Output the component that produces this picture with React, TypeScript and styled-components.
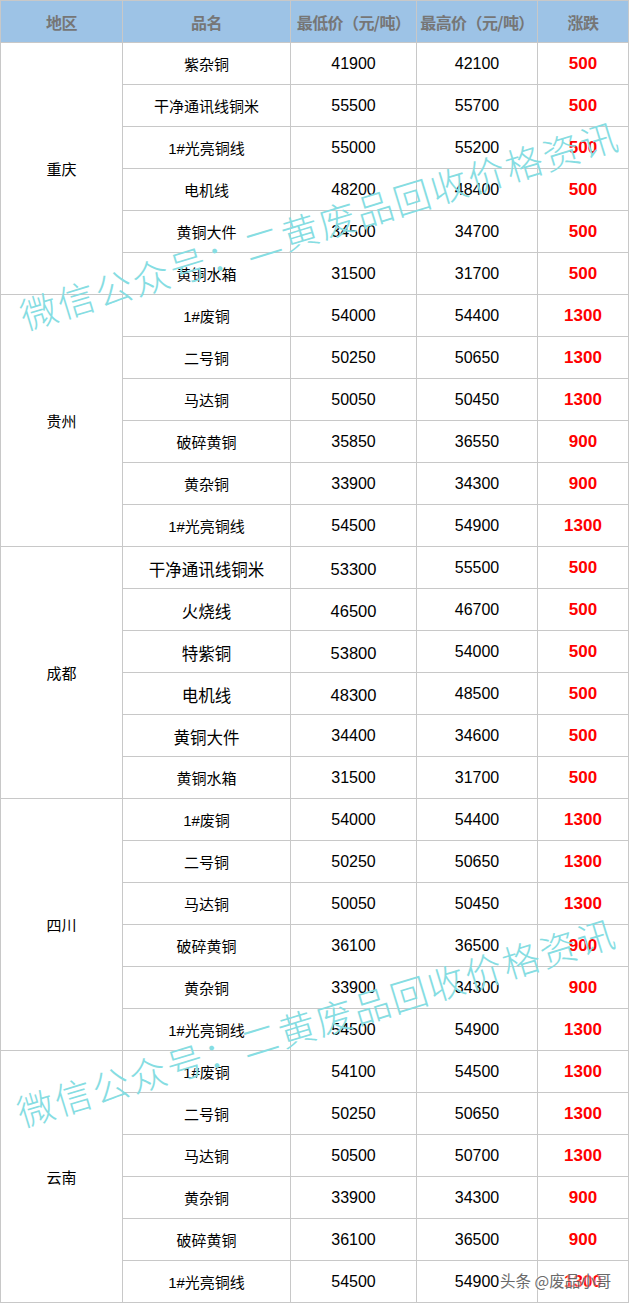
import styled, { createGlobalStyle } from "styled-components";

const GlobalStyle = createGlobalStyle`
	html, body {
		margin: 0;
		padding: 0;
		background: #ffffff;
	}
	body {
		font-family: "Liberation Sans", "Noto Sans CJK SC", sans-serif;
	}
`;

type Row = { name: string; low: string; high: string; diff: string };
type Region = { region: string; large?: boolean; rows: Row[] };

const r = (name: string, low: string, high: string, diff: string): Row => ({
	name,
	low,
	high,
	diff,
});

const regions: Region[] = [
	{
		region: "重庆",
		rows: [
			r("紫杂铜", "41900", "42100", "500"),
			r("干净通讯线铜米", "55500", "55700", "500"),
			r("1#光亮铜线", "55000", "55200", "500"),
			r("电机线", "48200", "48400", "500"),
			r("黄铜大件", "34500", "34700", "500"),
			r("黄铜水箱", "31500", "31700", "500"),
		],
	},
	{
		region: "贵州",
		rows: [
			r("1#废铜", "54000", "54400", "1300"),
			r("二号铜", "50250", "50650", "1300"),
			r("马达铜", "50050", "50450", "1300"),
			r("破碎黄铜", "35850", "36550", "900"),
			r("黄杂铜", "33900", "34300", "900"),
			r("1#光亮铜线", "54500", "54900", "1300"),
		],
	},
	{
		region: "成都",
		large: true,
		rows: [
			r("干净通讯线铜米", "53300", "55500", "500"),
			r("火烧线", "46500", "46700", "500"),
			r("特紫铜", "53800", "54000", "500"),
			r("电机线", "48300", "48500", "500"),
			r("黄铜大件", "34400", "34600", "500"),
			r("黄铜水箱", "31500", "31700", "500"),
		],
	},
	{
		region: "四川",
		rows: [
			r("1#废铜", "54000", "54400", "1300"),
			r("二号铜", "50250", "50650", "1300"),
			r("马达铜", "50050", "50450", "1300"),
			r("破碎黄铜", "36100", "36500", "900"),
			r("黄杂铜", "33900", "34300", "900"),
			r("1#光亮铜线", "54500", "54900", "1300"),
		],
	},
	{
		region: "云南",
		rows: [
			r("1#废铜", "54100", "54500", "1300"),
			r("二号铜", "50250", "50650", "1300"),
			r("马达铜", "50500", "50700", "1300"),
			r("黄杂铜", "33900", "34300", "900"),
			r("破碎黄铜", "36100", "36500", "900"),
			r("1#光亮铜线", "54500", "54900", "1300"),
		],
	},
];

export default function App() {
	return (
		<>
			<GlobalStyle />
			<Sheet>
				<Table>
					<colgroup>
						<col style={{ width: 122 }} />
						<col style={{ width: 168 }} />
						<col style={{ width: 126 }} />
						<col style={{ width: 121 }} />
						<col style={{ width: 91 }} />
					</colgroup>
					<thead>
						<tr>
							<Th>地区</Th>
							<Th>品名</Th>
							<Th>最低价（元/吨）</Th>
							<Th>最高价（元/吨）</Th>
							<Th>涨跌</Th>
						</tr>
					</thead>
					<tbody>
						{regions.map((g) =>
							g.rows.map((row, i) => (
								<Tr key={g.region + i}>
									{i === 0 && (
										<RegionCell rowSpan={g.rows.length}>{g.region}</RegionCell>
									)}
									<NameCell $large={g.large && i < 5}>{row.name}</NameCell>
									<NumCell $large={g.large && i < 4}>{row.low}</NumCell>
									<NumCell>{row.high}</NumCell>
									<DiffCell>{row.diff}</DiffCell>
								</Tr>
							))
						)}
					</tbody>
				</Table>

				<Watermark style={{ left: 319, top: 224 }}>
					微信公众号：二黄废品回收价格资讯
				</Watermark>
				<Watermark style={{ left: 316, top: 1021 }}>
					微信公众号：二黄废品回收价格资讯
				</Watermark>
				<Signature>头条 @废品小哥</Signature>
			</Sheet>
		</>
	);
}

const Sheet = styled.div`
	position: relative;
	width: 629px;
	height: 1304px;
	overflow: hidden;
	background: #ffffff;
`;

const Table = styled.table`
	width: 628px;
	border-collapse: collapse;
	table-layout: fixed;
	border: 1px solid #c8c8c8;
`;

const Th = styled.th`
	height: 41px;
	padding: 0;
	background: #9dc3e6;
	border: 1px solid #c8c8c8;
	color: #767676;
	font-family: "Noto Sans CJK SC", sans-serif;
	font-size: 16px;
	font-weight: 700;
	text-align: center;
	white-space: nowrap;
	letter-spacing: -0.6px;
`;

const Tr = styled.tr`
	height: 42px;
`;

const Cell = styled.td`
	padding: 0;
	border: 1px solid #c8c8c8;
	text-align: center;
	vertical-align: middle;
	color: #000000;
	white-space: nowrap;
`;

const RegionCell = styled(Cell)`
	font-size: 15px;
`;

const NameCell = styled(Cell)<{ $large?: boolean }>`
	font-size: ${({ $large }) => ($large ? "16.5px" : "15px")};
	padding-top: ${({ $large }) => ($large ? "3px" : "0")};
`;

const NumCell = styled(Cell)<{ $large?: boolean }>`
	font-size: ${({ $large }) => ($large ? "16.5px" : "16px")};
	padding-top: ${({ $large }) => ($large ? "4px" : "0")};
`;

const DiffCell = styled(Cell)`
	color: #ff0000;
	font-size: 17px;
	font-weight: 700;
`;

const Watermark = styled.span`
	position: absolute;
	transform: translate(-50%, -50%) rotate(-17deg);
	font-family: "Noto Sans CJK SC", sans-serif;
	font-weight: 300;
	font-size: 37px;
	letter-spacing: 2px;
	color: #86dde2;
	white-space: nowrap;
	pointer-events: none;
`;

const Signature = styled.span`
	position: absolute;
	left: 500px;
	top: 1269px;
	font-family: "Noto Sans CJK SC", sans-serif;
	font-size: 15.5px;
	color: #5a5a5a;
	opacity: 0.9;
	text-shadow: 0 0 2px #ffffff, 0 0 2px #ffffff;
	white-space: nowrap;
	pointer-events: none;
`;
